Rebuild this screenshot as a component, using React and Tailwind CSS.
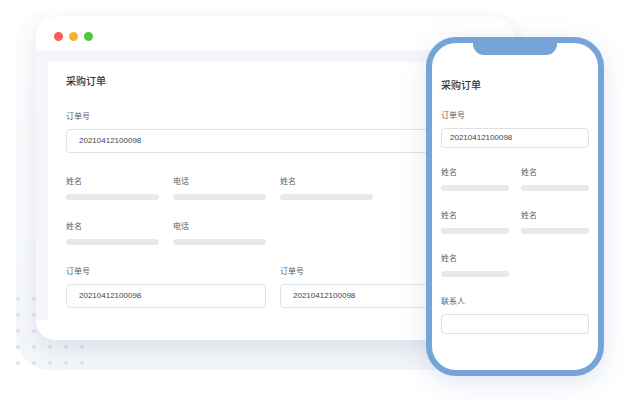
import React from 'react';

const Label = ({ children, className = '' }) => (
  <div className={`text-[8px] leading-[12px] text-[#5b6066] ${className}`}>{children}</div>
);

const Bar = ({ className = '' }) => (
  <div className={`h-[6px] rounded-full bg-[#e6e9ee] ${className}`}></div>
);

const Field = ({ value, className = '' }) => (
  <div className={`flex items-center rounded-[4px] border border-[#dde2e8] bg-white text-[8px] text-[#444] ${className}`}>
    {value}
  </div>
);

function BrowserCard() {
  return (
    <div className="relative z-10 flex h-[323px] w-[478px] flex-col overflow-hidden rounded-[20px] bg-white shadow-[0_12px_20px_rgba(140,160,200,0.2)]">
      <div className="flex h-[33px] items-center gap-[6px] pl-[18px] pt-[5px]">
        <span className="h-[9px] w-[9px] rounded-full bg-[#fd5b57]"></span>
        <span className="h-[9px] w-[9px] rounded-full bg-[#fbb12b]"></span>
        <span className="h-[9px] w-[9px] rounded-full bg-[#4fc640]"></span>
      </div>
      <div className="flex flex-1 flex-col">
        <div className="flex flex-1 bg-[#f5f6fa] pl-3 pt-3">
          <div className="flex-1 bg-white pl-[18px] pr-[18px] pt-3">
            <div className="text-[10px] font-medium leading-[16px] text-[#333]">采购订单</div>
            <Label className="mt-[21px]">订单号</Label>
            <Field value="20210412100098" className="mt-[6px] h-[24px] pl-3" />

            <div className="mt-[23px] flex gap-[14px]">
              {['姓名', '电话', '姓名'].map((t, i) => (
                <div key={i} className="w-[93px]">
                  <Label>{t}</Label>
                  <Bar className="mt-[6px]" />
                </div>
              ))}
            </div>

            <div className="mt-[21px] flex gap-[14px]">
              {['姓名', '电话'].map((t, i) => (
                <div key={i} className="w-[93px]">
                  <Label>{t}</Label>
                  <Bar className="mt-[6px]" />
                </div>
              ))}
            </div>

            <div className="mt-[21px] flex gap-[14px]">
              <div className="w-[200px]">
                <Label>订单号</Label>
                <Field value="20210412100098" className="mt-[6px] h-[24px] pl-3" />
              </div>
              <div className="flex-1">
                <Label>订单号</Label>
                <Field value="20210412100098" className="mt-[6px] h-[24px] pl-3" />
              </div>
            </div>
          </div>
        </div>
        <div className="h-5 bg-white"></div>
      </div>
    </div>
  );
}

function Phone() {
  return (
    <div className="absolute left-[426px] top-[37px] z-20 h-[339px] w-[178px] rounded-[30px] border-[6px] border-[#75a4d9] bg-white shadow-[0_6px_26px_rgba(110,140,190,0.22)]">
      <div className="absolute left-1/2 top-0 h-[12px] w-[84px] -translate-x-1/2 rounded-b-[11px] bg-[#75a4d9]"></div>
      <div className="px-[9px] pt-[35px]">
        <div className="text-[10px] font-medium leading-[16px] text-[#333]">采购订单</div>
        <Label className="mt-[16px]">订单号</Label>
        <Field value="20210412100098" className="mt-[6px] h-[20px] pl-[8px]" />

        <div className="mt-[19px] flex gap-[12px]">
          <div className="flex-1">
            <Label>姓名</Label>
            <Bar className="mt-[6px]" />
          </div>
          <div className="flex-1">
            <Label>姓名</Label>
            <Bar className="mt-[6px]" />
          </div>
        </div>

        <div className="mt-[19px] flex gap-[12px]">
          <div className="flex-1">
            <Label>姓名</Label>
            <Bar className="mt-[6px]" />
          </div>
          <div className="flex-1">
            <Label>姓名</Label>
            <Bar className="mt-[6px]" />
          </div>
        </div>

        <div className="mt-[19px] flex gap-[12px]">
          <div className="flex-1">
            <Label>姓名</Label>
            <Bar className="mt-[6px]" />
          </div>
          <div className="flex-1"></div>
        </div>

        <Label className="mt-[19px]">联系人</Label>
        <Field value="" className="mt-[6px] h-[20px]" />
      </div>
    </div>
  );
}

export default function App() {
  return (
    <div className="relative h-[400px] w-[640px] overflow-hidden bg-white font-['Liberation_Sans','Noto_Sans_CJK_SC',sans-serif]">
      {/* back plate with clipped card shadow */}
      <div className="absolute left-[16px] top-[9px] overflow-hidden rounded-[34px] bg-gradient-to-b from-[#fcfcfd] to-[#f4f6f9] pb-[30px] pl-5 pr-[10px] pt-2">
        <BrowserCard />
      </div>

      {/* dot grid */}
      <div className="absolute left-[16px] top-[297px] z-[5] grid grid-cols-5 gap-[12px]">
        {Array.from({ length: 25 }).map((_, i) => (
          <span key={i} className="h-1 w-1 rounded-full bg-[#dde1e8]"></span>
        ))}
      </div>

      <Phone />
    </div>
  );
}
